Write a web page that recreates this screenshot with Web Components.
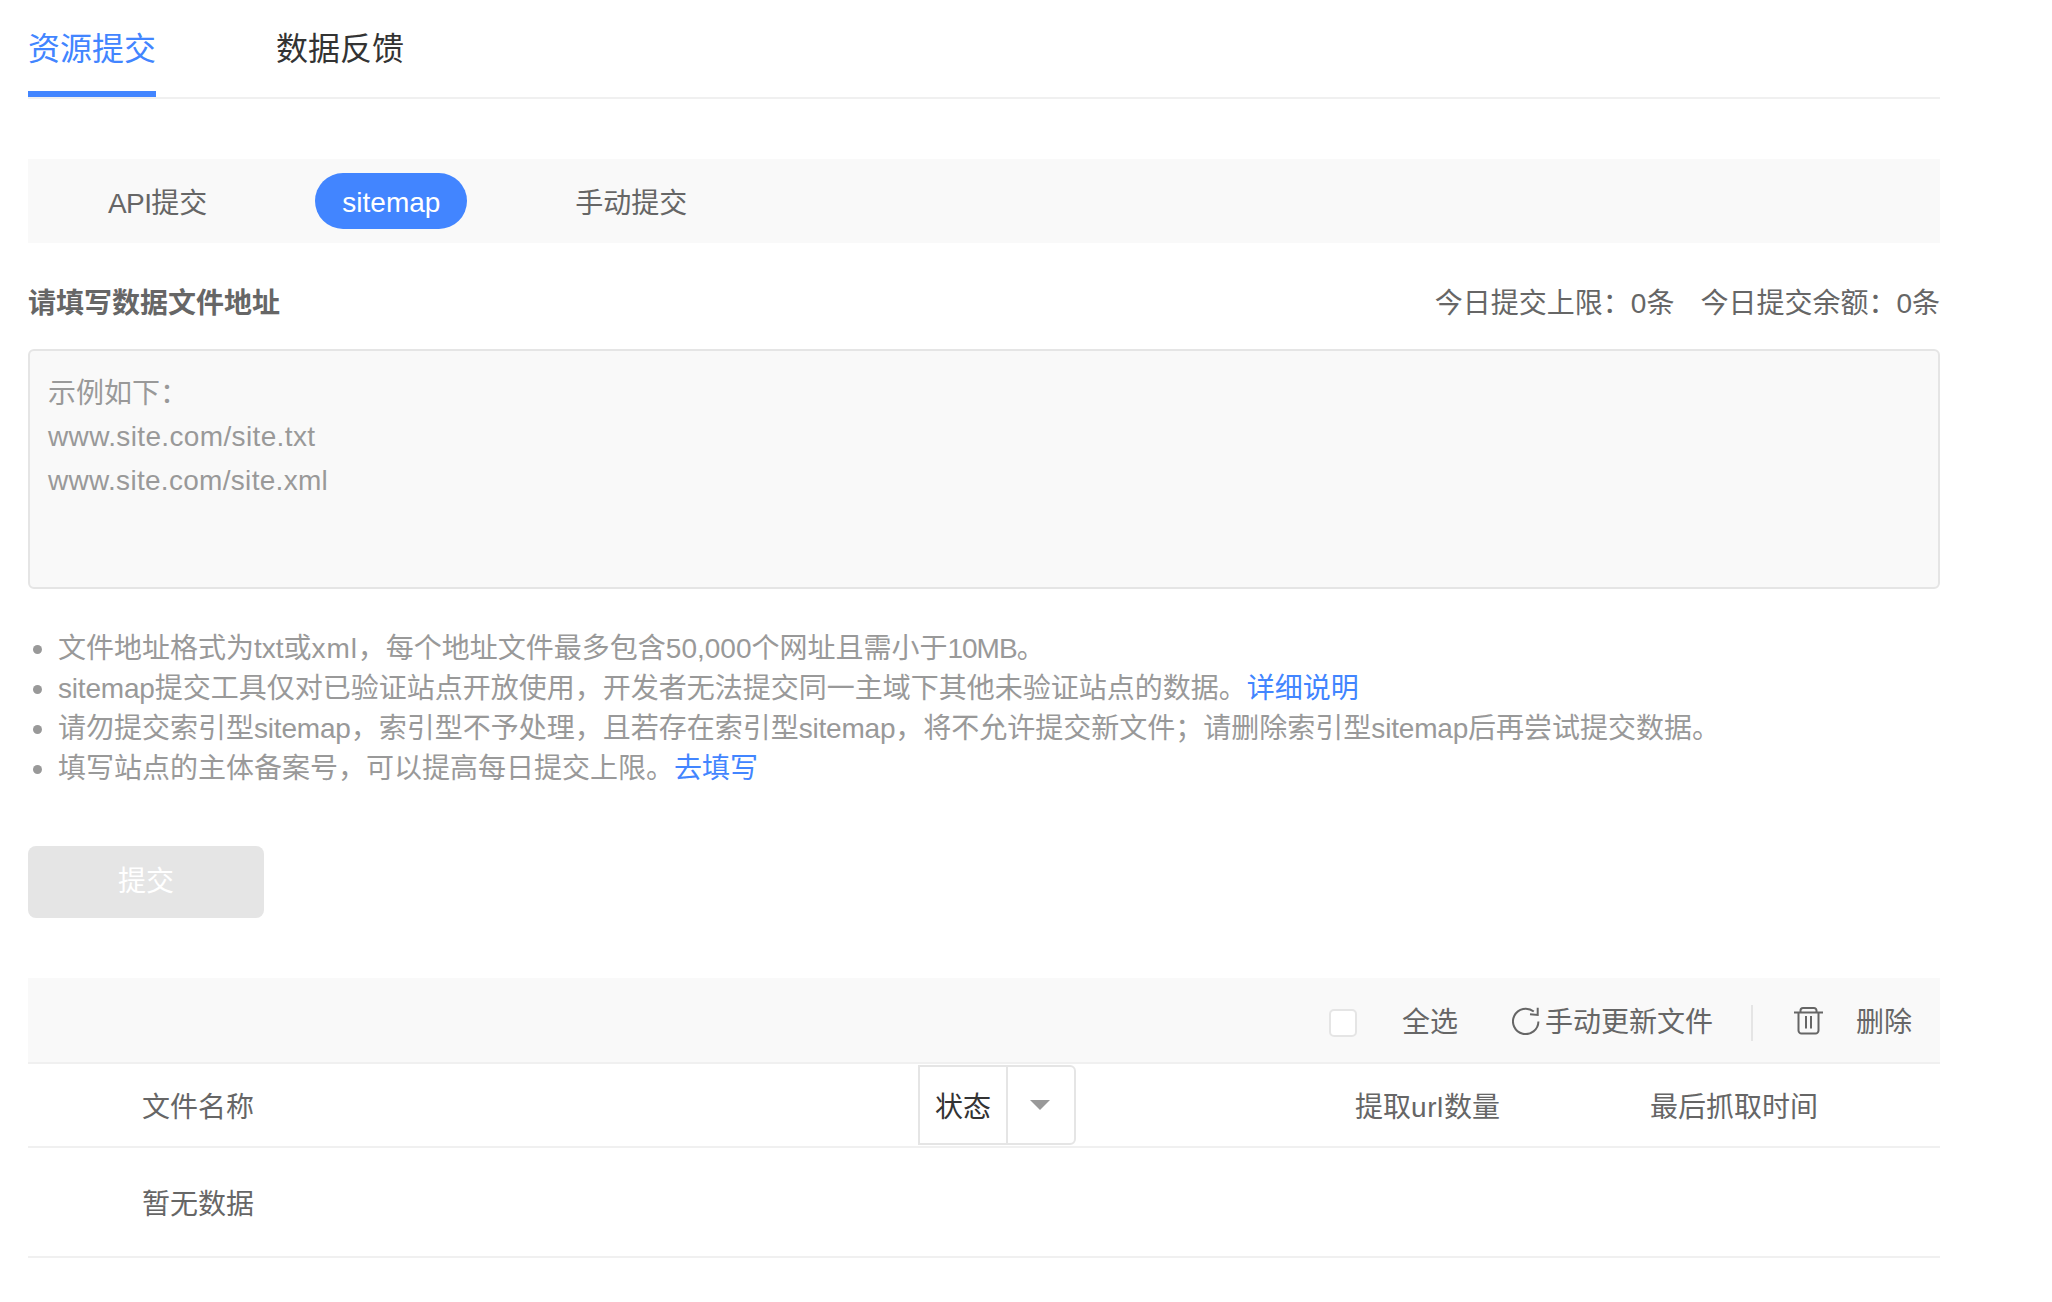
<!DOCTYPE html>
<html lang="zh-CN"><head><meta charset="utf-8"><title>资源提交</title>
<style>
html,body{margin:0;padding:0;background:#fff}
body{font:28px/40px "Liberation Sans","Noto Sans CJK SC",sans-serif;color:#666}
</style></head><body>
<submit-page></submit-page>
<script>
function def(name,html){customElements.define(name,class extends HTMLElement{constructor(){super();this.attachShadow({mode:"open"}).innerHTML=html}})}
const blue="#4285ff";
def("main-tabs",`<style>:host{display:flex;gap:120px;height:97px;border-bottom:2px solid #f0f0f0;font-size:32px;line-height:44px;color:#333}
div{box-sizing:border-box;height:97px;padding-top:27px}
.on{color:${blue};border-bottom:6px solid ${blue}}</style>
<div class="on">资源提交</div><div>数据反馈</div>`);
def("sub-tabs",`<style>:host{display:flex;align-items:center;height:84px;background:#f9f9f9;margin-top:60px;padding-left:80px;box-sizing:border-box;color:#666}
div{line-height:40px;padding-top:6px}
i{font-style:normal;letter-spacing:-.6px}
.pill{background:${blue};color:#fff;height:56px;padding:0;line-height:60px;width:152px;text-align:center;border-radius:28px;margin:0 108px 0 108px}</style>
<div><i>API</i>提交</div><div class="pill">sitemap</div><div>手动提交</div>`);
def("form-head",`<style>:host{display:flex;justify-content:space-between;align-items:center;height:40px;margin-top:39px;color:#666}
b{font-weight:700;padding-top:4px}div{padding-top:4px}span{margin-left:26px}</style>
<b>请填写数据文件地址</b><div><span>今日提交上限：0条</span><span>今日提交余额：0条</span></div>`);
def("url-box",`<style>:host{display:block;box-sizing:border-box;height:240px;margin-top:27px;border:2px solid #e5e5e5;border-radius:6px;background:#f9f9f9;padding:21px 18px;line-height:44px;color:#999}
div{height:44px}.f{height:43px}.w{letter-spacing:.36px}.y{letter-spacing:.3px}</style><div class="f">示例如下：</div><div class="w">www.site.com/site.txt</div><div class="y">www.site.com/site.xml</div>`);
def("note-list",`<style>:host{display:block;margin-top:40px;color:#999}
ul{margin:0;padding:0;list-style:none}
li{position:relative;padding-left:30px;height:40px;line-height:40px}
li::before{content:"";position:absolute;left:5px;top:16px;width:9px;height:9px;border-radius:50%;background:#999}
a{color:${blue};text-decoration:none}
.x{letter-spacing:.9px}.m{letter-spacing:-1px}.s{letter-spacing:-.2px}</style>
<ul><li>文件地址格式为txt或<span class="x">xml</span>，每个地址文件最多包含50,000个网址且需小于<span class="m">10MB</span>。</li>
<li><span class="s">sitemap</span>提交工具仅对已验证站点开放使用，开发者无法提交同一主域下其他未验证站点的数据。<a href="#">详细说明</a></li>
<li>请勿提交索引型<span class="s">sitemap</span>，索引型不予处理，且若存在索引型<span class="s">sitemap</span>，将不允许提交新文件；请删除索引型<span class="s">sitemap</span>后再尝试提交数据。</li>
<li>填写站点的主体备案号，可以提高每日提交上限。<a href="#">去填写</a></li></ul>`);
def("submit-button",`<style>:host{display:block;width:236px;height:72px;margin-top:57px;background:#e5e5e5;border-radius:8px;color:#fff;text-align:center;line-height:72px}</style>提交`);
def("file-toolbar",`<style>:host{display:flex;align-items:center;justify-content:flex-end;height:84px;margin-top:60px;background:#f9f9f9;border-bottom:2px solid #f0f0f0;padding-right:28px;color:#666}
.cb{box-sizing:border-box;width:28px;height:28px;border:2px solid #e5e5e5;border-radius:5px;background:#fff;margin:6px 45px 0 0}
svg{display:block;flex:none;margin-top:2px}
.all,.up,.del{padding-top:6px}
.all{margin-right:54px}.up{margin-left:5px;margin-right:38px}
.sep{width:2px;height:36px;background:#e5e5e5;margin:6px 41px 0 0}
.del{margin-left:33px}</style>
<div class="cb"></div><div class="all">全选</div>
<svg width="28" height="28" viewBox="0 0 28 28" fill="none" stroke="#666" stroke-width="2"><path d="M21.8 4.6A12.7 12.7 0 1 0 26.4 14.5"/><path d="M25.7 .7V8L18 7.3"/></svg>
<div class="up">手动更新文件</div><div class="sep"></div>
<svg width="29" height="28" viewBox="0 0 29 28" fill="none" stroke="#666" stroke-width="2"><path d="M0 5.5h29M6.5 5.5V3.5a2.5 2.5 0 0 1 2.5-2.5h11a2.5 2.5 0 0 1 2.5 2.5v2M4.5 5.5V23.5a3 3 0 0 0 3 3h14a3 3 0 0 0 3-3V5.5M12 9v12.5M17 9v12.5"/></svg>
<div class="del">删除</div>`);
def("table-head",`<style>:host{display:flex;align-items:center;height:82px;border-bottom:2px solid #f0f0f0;color:#666}
.name{width:890px;box-sizing:border-box;padding:6px 0 0 114px}
.sel{display:flex;box-sizing:border-box;width:158px;height:80px;border:2px solid #e5e5e5;border-radius:0 6px 6px 0;color:#333}
.sel .v{box-sizing:border-box;width:88px;padding-left:15px;line-height:82px;border-right:2px solid #e5e5e5}
.sel .a{flex:1;display:flex;align-items:center;justify-content:center;padding-right:2px}
.t{width:0;height:0;border:10px solid transparent;border-top-color:#999;border-bottom:0}
.c1{margin-left:279px;width:295px;padding-top:6px}.c2{padding-top:6px}i{font-style:normal;letter-spacing:.6px}</style>
<div class="name">文件名称</div>
<div class="sel"><div class="v">状态</div><div class="a"><div class="t"></div></div></div>
<div class="c1">提取<i>url</i>数量</div><div class="c2">最后抓取时间</div>`);
def("empty-row",`<style>:host{display:flex;align-items:center;box-sizing:border-box;height:110px;border-bottom:2px solid #f0f0f0;padding:6px 0 0 114px;color:#666}</style>暂无数据`);
def("submit-page",`<style>:host{display:block;width:1912px;margin-left:28px}</style>
<main-tabs></main-tabs><sub-tabs></sub-tabs><form-head></form-head><url-box></url-box><note-list></note-list><submit-button></submit-button><file-toolbar></file-toolbar><table-head></table-head><empty-row></empty-row>`);
</script></body></html>
